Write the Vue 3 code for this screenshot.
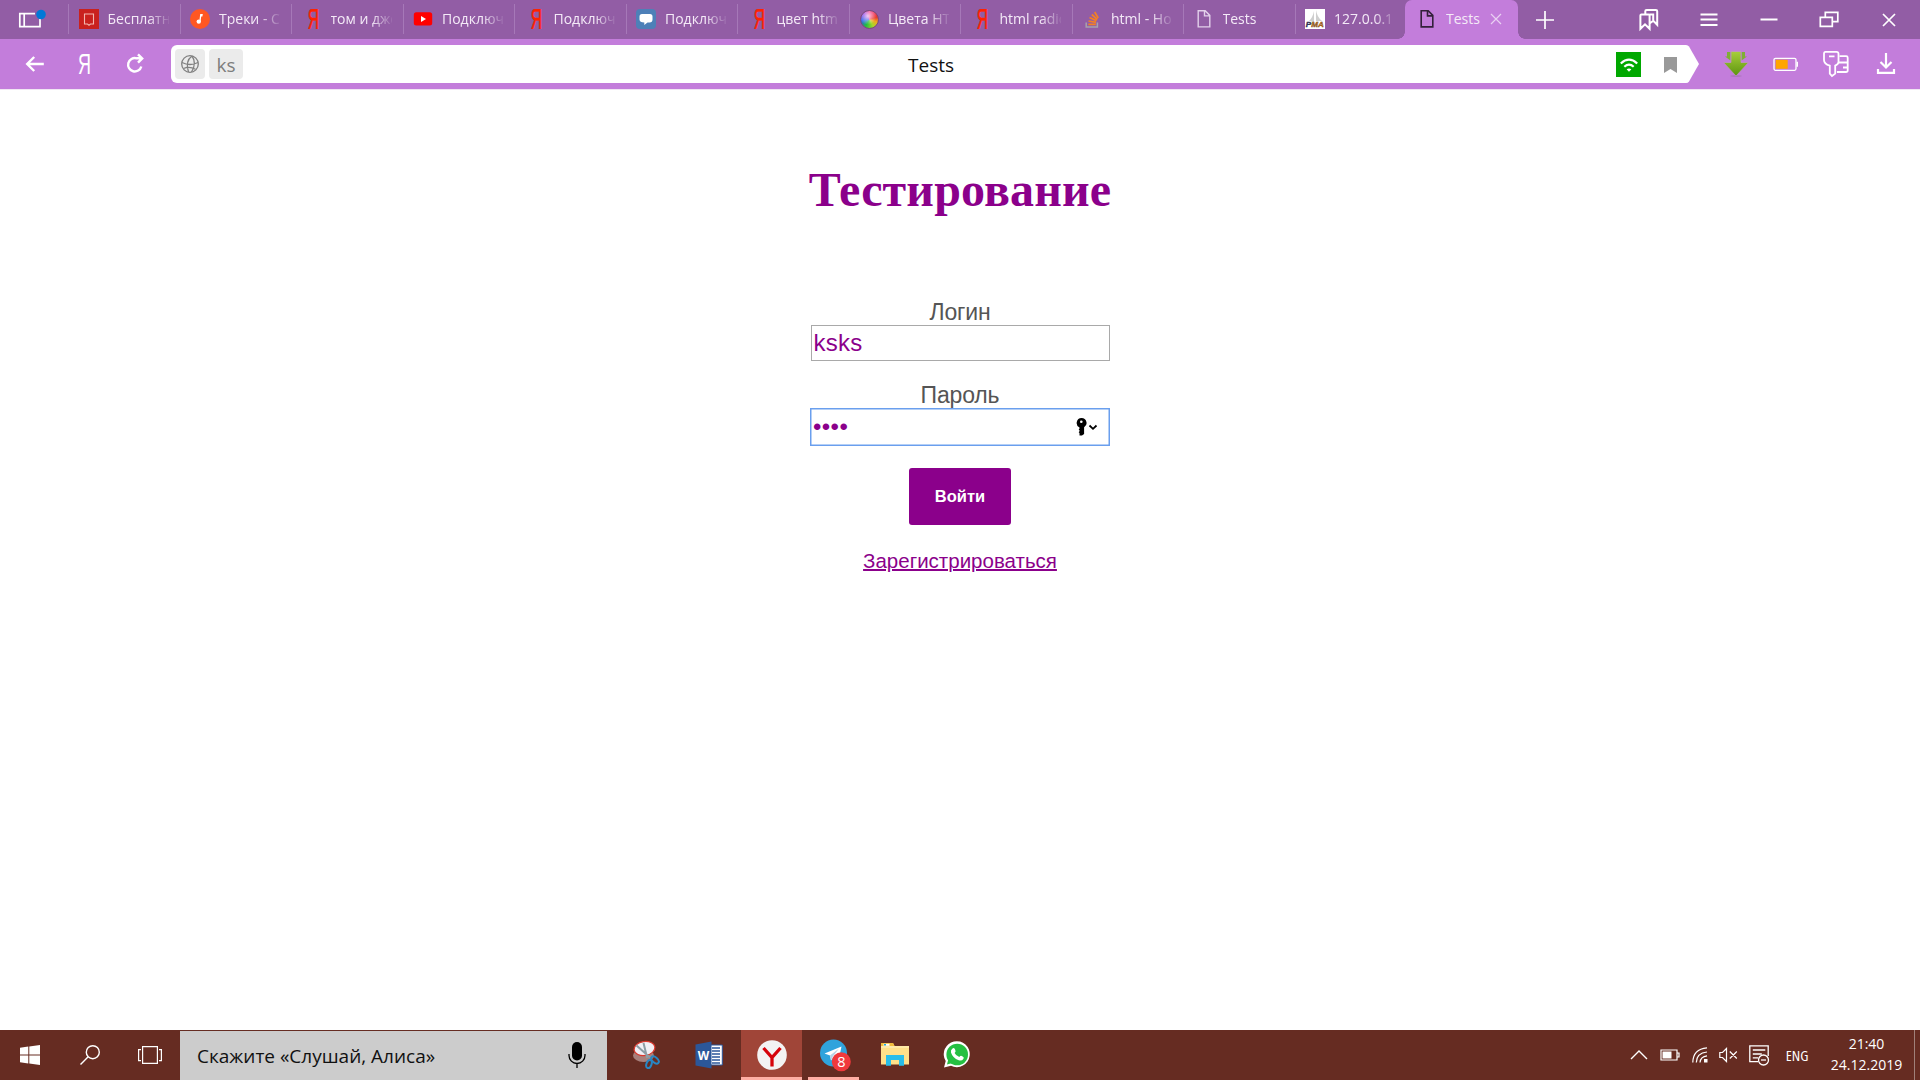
<script setup>
const tabs = [
  { icon: 'book', title: 'Бесплатно' },
  { icon: 'music', title: 'Треки - C' },
  { icon: 'ya', title: 'том и дже' },
  { icon: 'youtube', title: 'Подключ' },
  { icon: 'ya', title: 'Подключ' },
  { icon: 'chat', title: 'Подключ' },
  { icon: 'ya', title: 'цвет html' },
  { icon: 'wheel', title: 'Цвета HTM' },
  { icon: 'ya', title: 'html radio' },
  { icon: 'stack', title: 'html - Hos' },
  { icon: 'doc', title: 'Tests' },
  { icon: 'pma', title: '127.0.0.1' },
]
</script>

<template>
  <div class="screen">
    <header class="tabbar">
      <div class="panel">
        <svg width="30" height="24" viewBox="0 0 30 24" fill="none">
          <path d="M22 7.500V18.700H1.800V5.700H17M6.200 5.700V18.700" stroke="#fff" stroke-width="1.700" />
          <circle cx="23" cy="6.500" r="4.800" fill="#0078d7" />
        </svg>
      </div>
      <div v-for="(t, i) in tabs" :key="i" class="tab">
        <div v-if="t.icon === 'wheel'" class="wheel"></div>
        <svg v-else class="fav" width="20" height="20" viewBox="0 0 20 20">
          <g v-if="t.icon === 'book'">
            <rect width="20" height="20" fill="#c9211e" />
            <path d="M5.500 5h9v10h-3l-1.500 1.200L8.500 15h-3z" fill="none" stroke="#f3b5ae" stroke-width="1.100" />
          </g>
          <g v-else-if="t.icon === 'music'">
            <circle cx="10" cy="10" r="10" fill="#ff5722" />
            <circle cx="8.800" cy="12.600" r="2.200" fill="#fff" />
            <path d="M9.300 12.600L10.200 5h2.600l-.4 2.600h-1.200l-.6 5z" fill="#fff" />
          </g>
          <g v-else-if="t.icon === 'ya'">
            <text class="ya" transform="translate(5.700 20) scale(.54 1)" font-size="29" fill="#ff2200" stroke="#ff2200" stroke-width=".6">Я</text>
          </g>
          <g v-else-if="t.icon === 'youtube'">
            <rect x=".8" y="3.200" width="18.400" height="13.400" rx="2.500" fill="#f00" />
            <path d="M8 7v6l5-3z" fill="#fff" />
          </g>
          <g v-else-if="t.icon === 'chat'">
            <rect width="20" height="20" rx="4" fill="#4d80b8" />
            <path d="M6 5h8q2.500 0 2.500 2.500v3q0 3-3 3h-2L8.300 16v-2.500Q3.500 13.500 3.500 10.500v-3Q3.500 5 6 5z" fill="#fff" />
          </g>
          <g v-else-if="t.icon === 'stack'" fill="none">
            <path d="M4.200 13.500v4.400h11.200v-4.400" stroke="#a7a3ac" stroke-width="1.500" />
            <path d="M6.300 15.400h7.500M6.500 12l7.500 1.400M7.500 8.500l7 3.200M9.800 5.500l5.500 5M12.700 3l3.500 6" stroke="#f48024" stroke-width="1.700" />
          </g>
          <g v-else-if="t.icon === 'doc'" fill="none" stroke="#e2cfea" stroke-width="1.400">
            <path d="M4.200 1.700h7l4.600 4.700v11.500H4.200zM10.500 1.700v5.200h5.300" />
          </g>
          <g v-else>
            <rect width="20" height="20" fill="#fff" />
            <path d="M9 2q-1 6-5 10l5 1zM11 1v11h6Q12 8 11 1z" fill="#cfcfcf" />
            <text x=".8" y="18" font-size="8" font-weight="bold" font-style="italic" textLength="18" lengthAdjust="spacingAndGlyphs" font-family="Liberation Sans, sans-serif" stroke-width=".4"><tspan fill="#333357" stroke="#333357">P</tspan><tspan fill="#d9811b" stroke="#6b4420">MA</tspan></text>
          </g>
        </svg>
        <span class="label">{{ t.title }}</span>
      </div>
      <div class="tab active">
        <svg class="fav" width="20" height="20" viewBox="0 0 20 20" fill="none" stroke="#33203b" stroke-width="1.600">
          <path d="M4.200 1.700h7l4.600 4.700v11.500H4.200zM10.500 1.700v5.200h5.300" />
        </svg>
        <span class="label">Tests</span>
        <svg class="x" width="12" height="12" viewBox="0 0 12 12"><path d="M1 1l10 10M11 1L1 11" stroke="#e9d0f2" stroke-width="1.200" /></svg>
      </div>
      <svg class="plus" width="18" height="18" viewBox="0 0 18 18"><path d="M0 9h18M9 0v18" stroke="#fff" stroke-width="1.700" /></svg>
      <div class="controls">
        <svg width="24" height="24" viewBox="0 0 24 24" fill="none" stroke="#fff" stroke-width="2">
          <path d="M3.400 7.500q0-1 1-1h7.200q1 0 1 1v13.300L8 16.300l-4.600 4.500zM8.300 6V3.300q0-1.300 1.300-1.300h9.300q1.300 0 1.300 1.300v13.500l-3.900-4-3.700 2.700M16.200 12V6.500h-3.600" />
        </svg>
        <svg width="24" height="24" viewBox="0 0 24 24" stroke="#fff" stroke-width="2"><path d="M3.500 6.500h17M3.500 11.500h17M3.500 17h17" /></svg>
        <svg width="24" height="24" viewBox="0 0 24 24" stroke="#fff" stroke-width="2"><path d="M3.500 11.500h17" /></svg>
        <svg width="24" height="24" viewBox="0 0 24 24" fill="none" stroke="#fff" stroke-width="1.700"><path d="M3.300 9.300h12v9h-12zM8.300 9V4.300h12.500v9.400h-5" /></svg>
        <svg width="24" height="24" viewBox="0 0 24 24" stroke="#fff" stroke-width="1.700"><path d="M6 6l12 12M18 6L6 18" /></svg>
      </div>
    </header>

    <div class="toolbar">
      <div class="nav">
        <svg width="24" height="24" viewBox="0 0 24 24" fill="none" stroke="#fff" stroke-width="2.400"><path d="M20.800 12H4.500M11.200 5l-7 7 7 7" /></svg>
        <svg width="24" height="24" viewBox="0 0 24 24"><text class="ya" transform="translate(5 22) scale(.6 1)" font-size="30" fill="#fff">Я</text></svg>
        <svg width="24" height="24" viewBox="0 0 24 24" fill="none" stroke="#fff" stroke-width="2.400"><path d="M18.300 14.500a6.700 6.700 0 1 1-4.800-8.200H19M15 2.300l4.200 4.100-4.200 4.300" /></svg>
      </div>
      <div class="address">
        <div class="chip globe">
          <svg width="20" height="20" viewBox="0 0 20 20" fill="none" stroke="#808080" stroke-width="1.300">
            <circle cx="10" cy="10" r="8.300" /><path d="M12 2q-7 5-3.500 16M12 2q5 7-.5 16M2 8.500q8 4 16 0M3.500 14.500q6-2.500 12 .8" />
          </svg>
        </div>
        <div class="chip ks">ks</div>
        <div class="title">Tests</div>
        <svg class="wifi" width="25" height="25" viewBox="0 0 25 25">
          <rect width="25" height="25" fill="#00a800" />
          <path d="M4.800 11.500q8.200-7.600 16.400 0M8.300 14.700q4.700-4.200 9.400 0" fill="none" stroke="#fff" stroke-width="2.200" />
          <path d="M10.600 17.300q2.400-1.700 4.800 0L13 19.700z" fill="#fff" />
        </svg>
        <svg class="mark" width="13" height="16" viewBox="0 0 13 16"><path d="M0 0h13v16l-6.500-4L0 16z" fill="#999" /></svg>
        <svg class="tip" width="13" height="38" viewBox="0 0 13 38"><path d="M0 0q2 0 3 1.500L13 19 3 36.500Q2 38 0 38z" fill="#fff" /></svg>
      </div>
      <div class="ext">
        <svg width="26" height="26" viewBox="0 0 26 26">
          <defs><linearGradient id="g" x2="0" y2="1"><stop offset="0" stop-color="#a8cf3a" /><stop offset="1" stop-color="#5c9410" /></linearGradient></defs>
          <ellipse cx="13" cy="25" rx="6" ry=".8" fill="#a873ba" />
          <path d="M4 1h3.500v8.500L2 5.500h2zM18.500 1H22v4.500h2l-5.500 4z" fill="#7fae35" />
          <path d="M8 .5h10v11h7.500L13 25 .5 11.500H8z" fill="url(#g)" stroke="#c391cf" stroke-width=".7" />
        </svg>
        <svg width="26" height="16" viewBox="0 0 26 16"><rect x="1" y="2.300" width="22" height="12" rx="1.500" fill="none" stroke="#fff" stroke-width="1.300" /><path d="M23.500 5.800h1.500v5h-1.500z" fill="#fff" /><rect x="2.700" y="3.800" width="12" height="9" fill="#ffa500" /></svg>
        <svg width="28" height="28" viewBox="0 0 28 28" fill="none" stroke="#fff" stroke-width="1.800">
          <path d="M3.500 1.800h11q2 0 2 2V12q0 2-3.300 3.600v8L10 26l-2.200-2.400v-8Q2 14 2 10V3.800q0-2 1.500-2zM7 6.300h5.500" />
          <path d="M17.500 6.200h6.700q1.500 0 1.500 1.500v12.500q0 1.800-1.800 1.800h-9M17 12.500h8.500M21 17.500h4.500" />
        </svg>
        <svg width="24" height="24" viewBox="0 0 24 24" fill="none" stroke="#fff" stroke-width="2.200"><path d="M12 1v14.500M6.500 10l5.500 5.500 5.500-5.500M4 17v3.800h16V17" /></svg>
      </div>
    </div>

    <main class="page">
      <h1>Тестирование</h1>
      <label class="lab login">Логин</label>
      <div class="field">ksks</div>
      <label class="lab pass">Пароль</label>
      <div class="field focus">
        <span class="dots">••••</span>
        <svg width="22" height="18" viewBox="0 0 22 18">
          <path d="M5.500 0a5 5 0 0 1 2.600 9.300V16L6 17.500H3.500V15l-.8-.8.8-.9v-1l-.8-.8.8-.9V9.500A5 5 0 0 1 5.500 0z" />
          <circle cx="5.300" cy="3.700" r="1.300" fill="#fff" />
          <path d="M13.500 7.500l3.500 3.300 3.500-3.300" fill="none" stroke="#000" stroke-width="1.800" />
        </svg>
      </div>
      <button class="enter">Войти</button>
      <a class="reg">Зарегистрироваться</a>
    </main>

    <footer class="taskbar">
      <div class="slot">
        <svg width="20" height="20" viewBox="0 0 20 20" fill="#fff"><path d="M0 2.800l8.300-1.200v7.900H0zM9.300 1.400L20 0v9.500H9.300zM0 10.500h8.300v7.900L0 17.200zM9.300 10.500H20V20L9.300 18.600z" /></svg>
      </div>
      <div class="slot">
        <svg width="20" height="20" viewBox="0 0 20 20" fill="none" stroke="#fff" stroke-width="1.400"><circle cx="12.800" cy="7.200" r="6.500" /><path d="M8.200 11.800L.5 19.500" /></svg>
      </div>
      <div class="slot">
        <svg width="24" height="20" viewBox="0 0 24 20" fill="none" stroke="#fff" stroke-width="1.200"><path d="M4.600 1.600h14.800v16.800H4.600zM3 4.600H.6v11H3M21 4.600h2.400v11H21" /></svg>
      </div>
      <div class="search">
        <span>Скажите «Слушай, Алиса»</span>
        <svg width="18" height="27" viewBox="0 0 18 27"><rect x="4" y="0" width="10" height="18.500" rx="5" /><path d="M1 12v1.500a8 8 0 0 0 16 0V12M9 21.500V26" fill="none" stroke="#000" stroke-width="1.300" /></svg>
      </div>
      <div class="apps">
        <div class="app">
          <svg width="30" height="30" viewBox="0 0 30 30">
            <ellipse cx="12.500" cy="15.500" rx="10.500" ry="6.500" fill="#a8807c" />
            <ellipse cx="13.500" cy="8.500" rx="10.500" ry="7" transform="rotate(-8 13.500 8.500)" fill="#f1eff5" stroke="#d9392f" stroke-width="1.200" />
            <path d="M5.500 5.500L19 17.500M12.500 3l3.700 15" stroke="#8d9da5" stroke-width="2" />
            <g fill="none" stroke="#2786c4" stroke-width="2"><ellipse cx="24" cy="20" rx="2.600" ry="4.400" transform="rotate(-50 24 20)" /><ellipse cx="18" cy="24" rx="2.500" ry="4.200" transform="rotate(20 18 24)" /></g>
          </svg>
        </div>
        <div class="app word">
          <svg width="28" height="28" viewBox="0 0 28 28">
            <path d="M15 4h12.300v20H15z" fill="#fff" stroke="#2b579a" stroke-width="1" />
            <path d="M17 7h8M17 10h8M17 13h8M17 16h8M17 19h8M17 22h8" stroke="#2b579a" stroke-width="1.300" />
            <path d="M.5 3.500L16.500.5v27L.5 24.500z" fill="#2b579a" />
            <text x="2.800" y="18.800" font-size="13" font-weight="bold" fill="#fff" textLength="11.500" lengthAdjust="spacingAndGlyphs" font-family="Open Sans, sans-serif">W</text>
          </svg>
        </div>
        <div class="app on">
          <svg width="30" height="30" viewBox="0 0 30 30"><circle cx="15" cy="15" r="14.800" fill="#f3f3f3" /><path d="M6.500 8l8.500 9.500L23.500 8M15 17v9.500" fill="none" stroke="#d6040b" stroke-width="3.300" /></svg>
        </div>
        <div class="app run">
          <svg width="34" height="34" viewBox="0 0 34 34">
            <circle cx="15.500" cy="15" r="13.500" fill="#2fa3dc" />
            <path d="M6.500 15.500L23.500 8.500l-3 14.500-5-3.500-2.500 3-1-5z" fill="#fff" /><path d="M12 17.500l9-7-6.500 8.500-1.500 3.500z" fill="#b9d4e6" />
            <circle cx="23.300" cy="23.800" r="9.500" fill="#f0393c" />
            <text x="23.300" y="29" text-anchor="middle" font-size="14.500" fill="#fff" font-family="Open Sans, sans-serif">8</text>
          </svg>
        </div>
        <div class="app">
          <svg width="28" height="24" viewBox="0 0 28 24">
            <path d="M0 0h12l1.500 3H28v18.500H0z" fill="#ffe08a" /><path d="M0 0h12l1.500 3H0z" fill="#f2bd3d" /><rect x="2.500" y=".8" width="6" height="2" fill="#fff" /><rect x="3" y="1" width="2" height="1.500" fill="#19a8d8" />
            <path d="M0 3h28v2H0z" fill="#ffeaa6" /><path d="M5 22.800V12h18v10.800h-5V17h-8v5.800z" fill="#28bdea" />
          </svg>
        </div>
        <div class="app">
          <svg width="28" height="28" viewBox="0 0 28 28">
            <path d="M1 26.500l1.700-6.500A13 13 0 1 1 8 24.800z" fill="#fff" /><circle cx="14.200" cy="13.500" r="10.800" fill="#25c042" /><path d="M4 23.500l1.500-6 4 4.500z" fill="#25c042" />
            <path d="M9.500 7.500q1.800-1.200 2.800 1.400.9 1.900-.7 3 1.500 2.900 4.700 4.200 1.300-2.100 3-.9 2.300 1 1.200 2.500-1.600 2.600-4.800 1.600Q9.600 17 8 11.500q-.6-2.500 1.500-4z" fill="#fff" />
          </svg>
        </div>
      </div>
      <div class="tray">
        <div class="t30"><svg width="18" height="10" viewBox="0 0 18 10"><path d="M1 9l8-8 8 8" fill="none" stroke="#fff" stroke-width="1.400" /></svg></div>
        <div class="t31"><svg width="20" height="12" viewBox="0 0 20 12"><path d="M1 1h16v10H1zM17.500 4h1.500v4h-1.500" fill="none" stroke="#fff" stroke-width="1.200" /><path d="M2.500 2.500h9v7h-9z" fill="#fff" /></svg></div>
        <div class="t29"><svg width="16" height="16" viewBox="0 0 16 16" fill="none" stroke="#fff" stroke-width="1.200"><path d="M.8 15.500Q1 2 15 .8M4.300 15.500Q4.500 6 15 5M8 15.500Q8.500 9.500 15 8.800" /><path d="M12 12h3.500v3.500H12z" fill="#fff" stroke="none" /></svg></div>
        <div class="t28"><svg width="19" height="16" viewBox="0 0 19 16" fill="none" stroke="#fff" stroke-width="1.200"><path d="M.8 5.500h2.700L7.500 1.500v13l-4-4H.8zM10.800 4.500l7 7M17.800 4.500l-7 7" /></svg></div>
        <div class="t34"><svg width="21" height="21" viewBox="0 0 21 21" fill="none" stroke="#fff" stroke-width="1.300"><path d="M9 16.700H.8V.9h18.400v10M3.800 5h12.500M3.800 9h9M3.800 12.800H9" /><circle cx="14.500" cy="15" r="5" /><path d="M12 15h5" /></svg></div>
        <div class="lang">ENG</div>
        <div class="clock"><span>21:40</span><span>24.12.2019</span></div>
      </div>
    </footer>
  </div>
</template>

<style>
body { background: #fff; }
</style>

<style scoped>
.screen { width: 1920px; height: 1080px; display: flex; flex-direction: column; overflow: hidden; background: #fff; font-family: "Open Sans", "Noto Sans", sans-serif; }
.screen svg { display: block; flex: none; }
.screen * { box-sizing: border-box; }
.ya { font-family: "Liberation Sans", sans-serif; }
.tabbar { height: 39px; display: flex; align-items: center; background: #925da5; flex: none; }
.panel { width: 68px; padding-left: 18px; }
.tab { width: 111.5px; height: 30px; flex: none; border-left: 1px solid #a678b8; display: flex; align-items: center; padding-left: 9.5px; margin-top: -1px; white-space: nowrap; }
.wheel { width: 19px; height: 19px; margin: 0 0 0 1px; border-radius: 50%; border: 1px solid #7b4b77; background: radial-gradient(circle at 40% 30%, rgba(255,255,255,.75), transparent 55%), conic-gradient(#f5358a, #e8382c 20%, #f3a81e 30%, #a6d82c 42%, #22c03a 58%, #2a63e8 72%, #8a2be0 88%, #f5358a); flex: none; }
.label { margin-left: 9px; width: 61px; overflow: hidden; font-size: 14px; font-stretch: 91%; line-height: 22px; color: #f4eaf7; -webkit-mask-image: linear-gradient(90deg, #000 66%, transparent 104%); mask-image: linear-gradient(90deg, #000 66%, transparent 104%); }
.tab.active { width: 113px; height: 39px; border: 0; margin: 0 0 0 -1px; background: #c37ddb; border-radius: 7px 7px 0 0; padding: 0 0 1px 12px; position: relative; }
.tab.active::before, .tab.active::after { content: ""; position: absolute; bottom: 0; width: 7px; height: 7px; }
.tab.active::before { left: -7px; background: radial-gradient(circle at 0 0, transparent 6.5px, #c37ddb 7px); }
.tab.active::after { right: -7px; background: radial-gradient(circle at 100% 0, transparent 6.5px, #c37ddb 7px); }
.tab.active .label { width: 34px; -webkit-mask-image: none; mask-image: none; }
.x { margin-left: 10px; }
.plus { margin-left: 18px; }
.controls { margin-left: auto; margin-right: 1px; display: flex; }
.controls svg { margin: 0 18px; }
.toolbar { height: 50px; flex: none; background: #c37ddb; display: flex; align-items: center; }
.nav { display: flex; width: 171px; padding-left: 10px; }
.nav svg { margin: 0 13px; }
.address { width: 1515px; height: 38px; background: #fff; border-radius: 6px 0 0 6px; display: flex; align-items: center; position: relative; margin-right: 25px; }
.chip { height: 30px; background: #ebebeb; border-radius: 4px; display: flex; align-items: center; justify-content: center; margin-left: 4px; }
.globe { width: 30px; }
.ks { width: 34px; color: #7d7d7d; font-size: 19px; font-stretch: 90%; padding-top: 1px; }
.title { margin-left: 665px; width: 60px; font-size: 19px; font-stretch: 88%; color: #111; padding-top: 1px; }
.wifi { margin-left: auto; }
.mark { margin: 2px 9px 0 23px; }
.tip { position: absolute; left: 100%; top: 0; }
.ext { display: flex; align-items: center; }
.ext svg { margin: 0 12px; }
.ext svg:nth-child(3) { margin: 0 11px; }
.ext svg:last-child { margin: 0 13px; }
.page { flex: 1; display: flex; flex-direction: column; align-items: center; font-family: "Liberation Sans", sans-serif; border-top: 1px solid #f0e6f3; }
h1 { margin: 72px 0 0; font: bold 48px/56px "Liberation Serif", serif; letter-spacing: .15px; color: #8b008b; white-space: nowrap; }
.lab { font-size: 23px; line-height: 27px; height: 26px; color: #555; letter-spacing: -.15px; }
.login { margin-top: 81px; }
.pass { margin-top: 21px; }
.field { width: 299px; height: 36px; border: 1px solid #a9a9a9; padding-left: 2px; font-size: 24px; line-height: 34px; letter-spacing: .25px; color: #8b008b; display: flex; align-items: center; }
.field.focus { width: 300px; height: 38px; border: 1px solid #6a9fee; box-shadow: inset 0 0 0 .5px #6a9fee; }
.dots { letter-spacing: .4px; }
.field svg { margin-left: auto; margin-right: 11px; }
.enter { margin-top: 22px; width: 102px; height: 57px; border: 0; border-radius: 3px; background: #8b008b; color: #fff; font: bold 16.5px "Liberation Sans", sans-serif; padding: 0; }
.reg { margin-top: 24px; font-size: 20.5px; line-height: 24px; color: #8b008b; text-decoration: underline; text-decoration-thickness: 2px; }
.taskbar { height: 50px; flex: none; background: #662c22; display: flex; align-items: center; }
.slot { width: 60px; display: flex; justify-content: center; }
.search { width: 427px; height: 49px; align-self: flex-end; background: #ccc; display: flex; align-items: center; justify-content: space-between; padding: 0 21px 0 17px; font-size: 19px; font-stretch: 92.5%; color: #111; white-space: nowrap; }
.apps { display: flex; margin-left: 8px; height: 50px; }
.app { width: 62px; height: 50px; display: flex; align-items: center; justify-content: center; position: relative; }
.app.word { width: 64px; }
.app.on { background: #a04538; border-bottom: 3px solid #ffaea4; padding-top: 3px; width: 61px; }
.app.run { padding-left: 3px; }
.app.run::after { content: ""; position: absolute; left: 6px; bottom: 0; width: 51px; height: 3px; background: #ffaea4; }
.tray { margin-left: auto; display: flex; align-items: center; height: 50px; color: #fff; font-size: 15px; }
.tray > div { display: flex; align-items: center; justify-content: center; }
.t30 { width: 30px; }
.t31 { width: 31px; }
.t29 { width: 29px; }
.t28 { width: 28px; }
.t34 { width: 34px; }
.lang { width: 42px; font-stretch: 86%; }
.tray .clock { width: 97px; height: 50px; flex-direction: column; line-height: 21px; font-size: 14px; font-stretch: 91%; border-right: 1px solid #a08079; margin-right: 5px; padding: 0 0 3px 1px; }
</style>
